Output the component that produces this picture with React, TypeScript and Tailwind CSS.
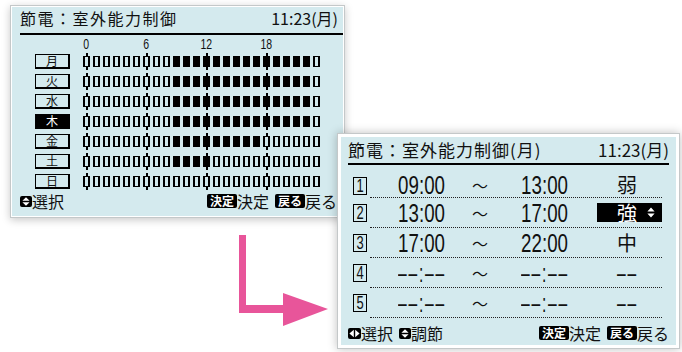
import React from "react";

const jp = "font-['Noto_Sans_CJK_JP','Noto_Sans',sans-serif]";
const num = "font-['Liberation_Sans',Arial,sans-serif]";

type Day = { label: string; from?: number; to?: number; selected?: boolean };

const days: Day[] = [
  { label: "月", from: 9, to: 22 },
  { label: "火", from: 9, to: 22 },
  { label: "水", from: 9, to: 22 },
  { label: "木", from: 9, to: 22, selected: true },
  { label: "金", from: 9, to: 17 },
  { label: "土", from: 9, to: 12 },
  { label: "日" },
];

const marks = [0, 6, 12, 18];
const hours = Array.from({ length: 24 }, (_, i) => i);

type Slot = { n: string; from: string; to: string; level: string; active?: boolean };

const slots: Slot[] = [
  { n: "1", from: "09:00", to: "13:00", level: "弱" },
  { n: "2", from: "13:00", to: "17:00", level: "強", active: true },
  { n: "3", from: "17:00", to: "22:00", level: "中" },
  { n: "4", from: "--:--", to: "--:--", level: "--" },
  { n: "5", from: "--:--", to: "--:--", level: "--" },
];

function UpDownIcon() {
  return (
    <svg width="12" height="11" viewBox="0 0 12 11" className="shrink-0">
      <rect width="12" height="11" rx="2" fill="#000" />
      <path d="M6 1.2 9.6 4.8H2.4Z M2.4 6.2H9.6L6 9.8Z" fill="#fff" />
    </svg>
  );
}

function LeftRightIcon() {
  return (
    <svg width="13" height="11" viewBox="0 0 13 11" className="shrink-0">
      <rect width="13" height="11" rx="2" fill="#000" />
      <path d="M1.4 5.5 5.8 1.8V9.2Z M11.6 5.5 7.2 1.8V9.2Z" fill="#fff" />
    </svg>
  );
}

function KeyTag({ children }: { children: React.ReactNode }) {
  return (
    <span className="inline-flex h-[14px] items-center rounded-[2px] bg-black px-[3px] text-[12px] leading-none font-bold text-white">
      {children}
    </span>
  );
}

function Cell({ filled, mark }: { filled: boolean; mark: boolean }) {
  return (
    <div className="flex w-[7px] flex-col items-center">
      <span className={`h-[3px] w-[2px] ${mark ? "bg-black" : ""}`} />
      <span className={`h-[11px] w-[7px] border-x-2 border-y border-black ${filled ? "bg-black" : ""}`} />
      <span className={`h-[3px] w-[2px] ${mark ? "bg-black" : ""}`} />
    </div>
  );
}

// tall narrow LCD-style digits
function Digits({ children, size = "text-[26px]" }: { children: string; size?: string }) {
  if (children.includes("-")) {
    // blank slot: short separated dashes
    return (
      <span className={`inline-block scale-x-[0.6] whitespace-nowrap leading-[20px] tracking-[3px] ${num} ${size}`}>
        {children.replace(/-/g, "–")}
      </span>
    );
  }
  return (
    <span className={`inline-block scale-x-[0.72] whitespace-nowrap leading-[20px] ${num} ${size}`}>{children}</span>
  );
}

function WeekPanel() {
  return (
    <div className={`ml-[10px] mt-[5px] w-[335px] border border-[#c4c8c9] bg-white p-px shadow-[0_2px_8px_rgba(0,0,0,0.22)] ${jp}`}>
      <div className="h-[209px] bg-[#d4eaee] pt-px text-[#111]">
        <div className="ml-[8px] flex items-center justify-between border-b-2 border-black pb-[5px] pr-[5px] text-[16px] leading-[20px]">
          <span className="tracking-[1.5px]">節電：室外能力制御</span>
          <span>11:23(月)</span>
        </div>

        <div className="ml-[71px] mt-[2px] flex h-[13px] gap-[3px]">
          {hours.map((h) => (
            <div key={h} className="flex w-[7px] justify-center">
              {marks.includes(h) && (
                <span className={`inline-block scale-x-[0.7] text-[15px] leading-[13px] ${num}`}>{h}</span>
              )}
            </div>
          ))}
        </div>

        <div className="ml-[23px] mt-px flex flex-col">
          {days.map((d) => (
            <div key={d.label} className="flex h-[20px] items-center gap-[13px]">
              <div
                className={`flex h-[15px] w-[35px] items-center justify-center border border-r-2 border-b-2 border-black text-[12px] leading-none ${
                  d.selected ? "bg-black text-white" : ""
                }`}
              >
                {d.label}
              </div>
              <div className="flex gap-[3px]">
                {hours.map((h) => (
                  <Cell
                    key={h}
                    mark={marks.includes(h)}
                    filled={d.from !== undefined && d.to !== undefined && h >= d.from && h <= d.to}
                  />
                ))}
              </div>
            </div>
          ))}
        </div>

        <div className="flex items-center justify-between pl-[8px] pr-[6px] text-[16px] leading-[20px]">
          <div className="flex items-center">
            <UpDownIcon />
            <span>選択</span>
          </div>
          <div className="flex items-center">
            <KeyTag>決定</KeyTag>
            <span className="mr-[6px]">決定</span>
            <KeyTag>戻る</KeyTag>
            <span>戻る</span>
          </div>
        </div>
      </div>
    </div>
  );
}

function DayPanel() {
  return (
    <div
      className={`absolute left-[337px] top-[133px] w-[343px] border border-[#c4c8c9] bg-white p-[3px] shadow-[0_0_9px_rgba(0,0,0,0.25)] ${jp}`}
    >
      <div className="h-[208px] bg-[#d4eaee] pt-[3px] text-[#111]">
        <div className="mx-[7px] flex items-center justify-between border-b-2 border-black pb-[3px] text-[17px] leading-[20px]">
          <span className="tracking-[1px]">節電：室外能力制御(月)</span>
          <span>11:23(月)</span>
        </div>

        <div className="mt-[3px] flex flex-col pl-[12px]">
          {slots.map((s, i) => (
            <div key={s.n} className={`flex h-[30px] items-center ${i === 0 ? "pt-[5px]" : ""}`}>
              <div className="flex h-[18px] w-[14px] items-center justify-center border border-black">
                <Digits size="text-[18px]">{s.n}</Digits>
              </div>
              <div className="ml-[3px] grid h-full w-[292px] grid-cols-[104px_12px_111px_65px] items-center border-b border-dotted border-[#222]">
                <div className="flex justify-center">
                  <Digits>{s.from}</Digits>
                </div>
                <div className="flex justify-center text-[16px] leading-none">〜</div>
                <div className="flex justify-center pl-[7px]">
                  <Digits>{s.to}</Digits>
                </div>
                <div className={`flex h-[19px] items-center ${s.active ? "bg-black text-white" : ""}`}>
                  <div className="flex w-[58px] justify-center pl-[2px]">
                    {s.level === "--" ? (
                      <Digits>{s.level}</Digits>
                    ) : (
                      <span className="text-[20px] leading-none">{s.level}</span>
                    )}
                  </div>
                  {s.active && (
                    <svg width="8" height="11" viewBox="0 0 8 11" className="-ml-[8px] shrink-0">
                      <path d="M4 0.5 7.6 4.6H0.4Z M0.4 6.4H7.6L4 10.5Z" fill="#fff" />
                    </svg>
                  )}
                </div>
              </div>
            </div>
          ))}
        </div>

        <div className="mx-[7px] mt-[5px] flex items-center justify-between text-[16px] leading-[20px]">
          <div className="flex items-center">
            <LeftRightIcon />
            <span className="mr-[6px]">選択</span>
            <UpDownIcon />
            <span>調節</span>
          </div>
          <div className="flex items-center">
            <KeyTag>決定</KeyTag>
            <span className="mr-[6px]">決定</span>
            <KeyTag>戻る</KeyTag>
            <span>戻る</span>
          </div>
        </div>
      </div>
    </div>
  );
}

export default function App() {
  return (
    <div className="relative h-[352px] w-[682px] overflow-hidden bg-white">
      <WeekPanel />
      <svg className="absolute left-[236px] top-[232px]" width="96" height="98" viewBox="0 0 96 98">
        <path d="M3 3H10V73H47V61L92 77L47 94V81H3Z" fill="#e8559a" />
      </svg>
      <DayPanel />
    </div>
  );
}
